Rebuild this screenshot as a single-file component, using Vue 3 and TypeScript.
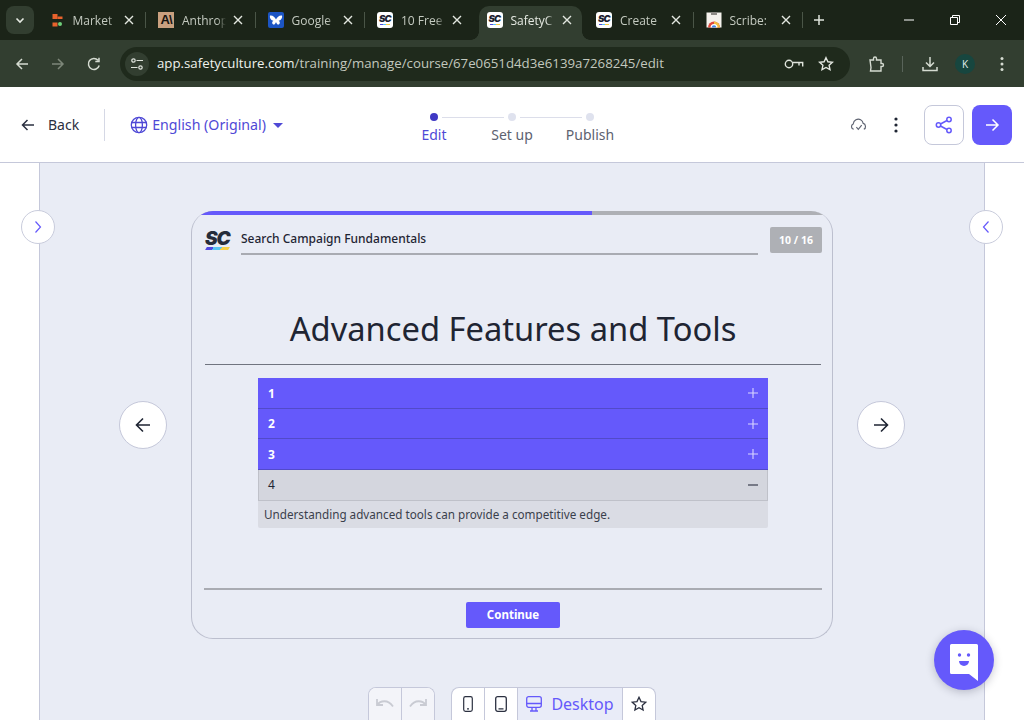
<template>
  <div class="screen">
    <div class="tabstrip">
      <button class="tab-search" type="button">
        <svg width="12" height="12" viewBox="0 0 12 12"><path d="M2.5 4.5 6 8l3.5-3.5" fill="none" stroke="#e6eae3" stroke-width="1.6" /></svg>
      </button>
      <div class="tabs">
        <div v-for="(tab, i) in tabs" :key="i" class="tab" :class="{ active: tab.active, sep: tab.sep }">
          <span class="favicon">
            <svg v-if="tab.icon === 'market'" width="16" height="16" viewBox="0 0 16 16">
              <rect x="3.500" y="2" width="5" height="5" fill="#e8622c" />
              <rect x="8.500" y="4.500" width="5" height="2.500" fill="#e8622c" />
              <rect x="3.500" y="10.500" width="5" height="4" fill="#e8622c" />
              <circle cx="11" cy="12" r="2" fill="#6fd07a" />
            </svg>
            <span v-else-if="tab.icon === 'anthropic'" class="fav-anthropic">A\</span>
            <svg v-else-if="tab.icon === 'google'" width="16" height="16" viewBox="0 0 16 16">
              <rect width="16" height="16" rx="2" fill="#1c55c4" />
              <path d="M2 3.500c2.300-.6 5 1.300 6 4 1-2.700 3.700-4.600 6-4 .6 2.800-1.300 5-3.400 5.200 1.500.5 1.700 2.900.3 3.700-1.300.6-2.400-1-2.900-2.500-.5 1.500-1.600 3.100-2.900 2.500-1.400-.8-1.200-3.200.3-3.700C3.300 8.500 1.400 6.300 2 3.500z" fill="#fff" />
            </svg>
            <span v-else-if="tab.icon === 'sc'" class="fav-sc">SC</span>
            <svg v-else width="16" height="16" viewBox="0 0 16 16">
              <rect x="0.500" y="0.500" width="15" height="15" fill="#f4f1ec" />
              <rect x="5" y="0" width="6" height="3" fill="#8d8a85" />
              <path d="M2 15.500a6 6 0 0 1 12 0z" fill="#e0483c" />
              <path d="M8 15.500V9.500a6 6 0 0 1 6 6z" fill="#f2bd42" />
              <path d="M4.500 15.500a3.500 3.500 0 0 1 7 0z" fill="#fff" />
              <path d="M5.800 15.500a2.200 2.200 0 0 1 4.400 0z" fill="#3f86e8" />
            </svg>
          </span>
          <span class="tab-title">{{ tab.title }}</span>
          <svg class="tab-close" width="10" height="10" viewBox="0 0 10 10"><path d="M1 1l8 8M9 1 1 9" stroke="#e3e7e0" stroke-width="1.400" /></svg>
        </div>
      </div>
      <svg class="new-tab" width="14" height="14" viewBox="0 0 14 14"><path d="M7 2v10M2 7h10" stroke="#dfe4dc" stroke-width="1.500" /></svg>
      <div class="win-controls">
        <svg width="12" height="12" viewBox="0 0 12 12"><path d="M1 6h10" stroke="#fff" /></svg>
        <svg width="12" height="12" viewBox="0 0 12 12"><path d="M1.500 3.500h7v7h-7zM3.500 3.500v-2h7v7h-2" fill="none" stroke="#fff" /></svg>
        <svg width="12" height="12" viewBox="0 0 12 12"><path d="M1 1l10 10M11 1 1 11" stroke="#fff" /></svg>
      </div>
    </div>

    <div class="toolbar">
      <svg class="tb-icon" width="16" height="16" viewBox="0 0 16 16"><path d="M14 8H3M8 3 3 8l5 5" fill="none" stroke="#d5dbd1" stroke-width="1.500" /></svg>
      <svg class="tb-icon" width="16" height="16" viewBox="0 0 16 16"><path d="M2 8h11M8 3l5 5-5 5" fill="none" stroke="#7d8779" stroke-width="1.500" /></svg>
      <svg class="tb-icon" width="16" height="16" viewBox="0 0 16 16"><path d="M13.200 9.500A5.500 5.500 0 1 1 12 4.200M13 1.800v3.700H9.300" fill="none" stroke="#d5dbd1" stroke-width="1.500" /></svg>
      <div class="omnibox">
        <span class="site-btn">
          <svg width="14" height="14" viewBox="0 0 14 14" fill="none" stroke="#dfe4dc" stroke-width="1.200">
            <circle cx="3.500" cy="3.500" r="1.700" /><path d="M6.500 3.500H13M1 10.500h6.500" /><circle cx="10.500" cy="10.500" r="1.700" />
          </svg>
        </span>
        <span class="url"><span class="host">app.safetyculture.com</span>/training/manage/course/67e0651d4d3e6139a7268245/edit</span>
        <svg width="20" height="12" viewBox="0 0 20 12" fill="none" stroke="#dfe4dc" stroke-width="1.400"><circle cx="5" cy="6" r="3.700" /><path d="M8.700 4.500h10v4M15 4.500v3" /></svg>
        <svg class="omni-star" width="16" height="16" viewBox="0 0 16 16"><path d="m8 1.700 1.900 4.100 4.500.5-3.300 3 .9 4.400L8 11.500l-4 2.200.9-4.400-3.300-3 4.500-.5z" fill="none" stroke="#e3e7e0" stroke-width="1.400" /></svg>
      </div>
      <svg class="ext" width="18" height="18" viewBox="0 0 18 18"><path d="M3 5h3.500V3.500a1.500 1.500 0 0 1 3 0V5H14v3.500h1a1.500 1.500 0 0 1 0 3h-1V16H3.500L4 12.500 3 5z" fill="none" stroke="#d5dbd1" stroke-width="1.400" /></svg>
      <span class="tb-divider"></span>
      <svg class="dl" width="16" height="16" viewBox="0 0 16 16"><path d="M8 1v9M4 6.500 8 10.500l4-4M1 11v3.500h14V11" fill="none" stroke="#d5dbd1" stroke-width="1.500" /></svg>
      <span class="avatar">K</span>
      <svg class="menu" width="4" height="16" viewBox="0 0 4 16"><circle cx="2" cy="2.500" r="1.500" fill="#d5dbd1" /><circle cx="2" cy="8" r="1.500" fill="#d5dbd1" /><circle cx="2" cy="13.500" r="1.500" fill="#d5dbd1" /></svg>
    </div>

    <header class="app-head">
      <div class="head-left">
        <svg width="16" height="16" viewBox="0 0 16 16"><path d="M14 8H2.500M7.500 3l-5 5 5 5" fill="none" stroke="#2b3040" stroke-width="1.500" /></svg>
        <span class="back">Back</span>
        <span class="head-divider"></span>
        <svg class="globe" width="18" height="18" viewBox="0 0 18 18" fill="none" stroke="#4f49d6" stroke-width="1.300">
          <circle cx="9" cy="9" r="7.700" /><ellipse cx="9" cy="9" rx="3.400" ry="7.700" /><path d="M1.500 6.500h15M1.500 11.500h15" />
        </svg>
        <span class="lang">English (Original)</span>
        <span class="caret"></span>
      </div>
      <div class="stepper">
        <div v-for="(step, i) in steps" :key="step" class="step" :class="{ current: i === 0 }">
          <span class="step-dot"></span>
          <span class="step-label">{{ step }}</span>
        </div>
      </div>
      <div class="head-right">
        <svg width="17" height="15" viewBox="0 0 16 14" fill="none" stroke="#5f6472" stroke-width="1.100"><path d="M3.500 11.500C1 11 .6 7.500 3 6.500 3.500 3 7 1 10 2.500c1.500.8 2.200 2.200 2.400 3.500 2.600.6 3 4.500.6 5.500" /><path d="m6 9.500 1.800 2L11 7.500" /></svg>
        <svg class="more" width="4" height="16" viewBox="0 0 4 16"><circle cx="2" cy="2" r="1.600" fill="#1f2533" /><circle cx="2" cy="8" r="1.600" fill="#1f2533" /><circle cx="2" cy="14" r="1.600" fill="#1f2533" /></svg>
        <button class="share" type="button">
          <svg width="18" height="18" viewBox="0 0 18 18" fill="none" stroke="#6559fb" stroke-width="1.500"><circle cx="3.500" cy="9" r="2.200" /><circle cx="14" cy="3.500" r="2.200" /><circle cx="14" cy="14.500" r="2.200" /><path d="m5.500 8 6.500-3.500M5.500 10l6.500 3.500" /></svg>
        </button>
        <button class="go" type="button">
          <svg width="16" height="16" viewBox="0 0 16 16"><path d="M2 8h12M8.500 2.500 14 8l-5.500 5.500" fill="none" stroke="#fff" stroke-width="1.500" /></svg>
        </button>
      </div>
    </header>

    <main class="canvas">
      <button class="panel-toggle left" type="button">
        <svg width="8" height="14" viewBox="0 0 8 14"><path d="m1.500 1.500 5 5.500-5 5.500" fill="none" stroke="#6559fb" stroke-width="1.200" /></svg>
      </button>
      <button class="panel-toggle right" type="button">
        <svg width="8" height="14" viewBox="0 0 8 14"><path d="M6.500 1.500 1.500 7l5 5.500" fill="none" stroke="#6559fb" stroke-width="1.200" /></svg>
      </button>

      <div class="stage">
        <button class="nav-btn" type="button">
          <svg width="18" height="18" viewBox="0 0 18 18"><path d="M16 9H2.500M9 2.500 2.500 9 9 15.500" fill="none" stroke="#1f2533" stroke-width="1.600" /></svg>
        </button>

        <section class="slide">
          <div class="progress"><div class="progress-fill" :style="{ width: progress + '%' }"></div></div>
          <div class="slide-head">
            <div class="logo"><span class="logo-text">SC</span><span class="logo-bar"></span></div>
            <div class="course">Search Campaign Fundamentals</div>
            <div class="count">10 / 16</div>
          </div>
          <h1 class="slide-title">Advanced Features and Tools</h1>
          <div class="accordion">
            <div v-for="row in rows" :key="row.label" class="acc-row" :class="{ open: row.open }">
              <span>{{ row.label }}</span>
              <svg width="10" height="10" viewBox="0 0 10 10">
                <path :d="row.open ? 'M0 5h10' : 'M5 0v10M0 5h10'" :stroke="row.open ? '#2b3040' : '#d9d6ff'" stroke-width="1.100" />
              </svg>
            </div>
            <div class="acc-body">Understanding advanced tools can provide a competitive edge.</div>
          </div>
          <div class="slide-foot">
            <button class="continue" type="button">Continue</button>
          </div>
        </section>

        <button class="nav-btn" type="button">
          <svg width="18" height="18" viewBox="0 0 18 18"><path d="M2 9h13.500M9 2.500 15.500 9 9 15.500" fill="none" stroke="#1f2533" stroke-width="1.600" /></svg>
        </button>
      </div>

      <div class="tools">
        <div class="tool-group">
          <span class="tool muted">
            <svg width="20" height="14" viewBox="0 0 20 14" fill="none" stroke="#c9cbd3" stroke-width="1.800"><path d="M2 2v6h6M2.500 8C5 3.500 13 2 18 9.500" /></svg>
          </span>
          <span class="tool muted">
            <svg width="20" height="14" viewBox="0 0 20 14" fill="none" stroke="#c9cbd3" stroke-width="1.800"><path d="M18 2v6h-6M17.500 8C15 3.500 7 2 2 9.500" /></svg>
          </span>
        </div>
        <div class="tool-group">
          <span class="tool">
            <svg width="10" height="16" viewBox="0 0 10 16" fill="none" stroke="#2b3040" stroke-width="1.200"><rect x="0.700" y="0.700" width="8.600" height="14.600" rx="1.800" /><path d="M4 12.800h2" /></svg>
          </span>
          <span class="tool">
            <svg width="12" height="16" viewBox="0 0 12 16" fill="none" stroke="#2b3040" stroke-width="1.300"><rect x="0.700" y="0.700" width="10.600" height="14.600" rx="2" /><path d="M3.500 12.800h5" /></svg>
          </span>
          <span class="tool desktop">
            <svg width="16" height="16" viewBox="0 0 16 16" fill="none" stroke="#6559fb" stroke-width="1.300"><rect x="0.700" y="0.700" width="14.600" height="10.600" rx="2" /><path d="M.7 7.500h14.600M6 11.500v3.300M10 11.500v3.300M4 15h8" /></svg>
            <span>Desktop</span>
          </span>
          <span class="tool">
            <svg width="16" height="16" viewBox="0 0 16 16"><path d="m8 1.300 2 4.300 4.700.6-3.500 3.200.9 4.700L8 11.800l-4.100 2.300.9-4.700-3.500-3.200L6 5.600z" fill="none" stroke="#2b3040" stroke-width="1.300" /></svg>
          </span>
        </div>
      </div>
    </main>

    <button class="chat" type="button">
      <svg width="28" height="37" viewBox="0 0 28 37">
        <path d="M1.500 0h25A1.500 1.500 0 0 1 28 1.500V37l-9-7H1.500A1.500 1.500 0 0 1 0 28.500v-27A1.500 1.500 0 0 1 1.500 0z" fill="#fff" />
        <circle cx="9.500" cy="11" r="1.700" fill="#6559fb" />
        <circle cx="18.500" cy="11" r="1.700" fill="#6559fb" />
        <path d="M9 17h10a5 5 0 0 1-10 0z" fill="#6559fb" />
      </svg>
    </button>
  </div>
</template>

<script setup lang="ts">
interface Tab {
  title: string;
  icon: "market" | "anthropic" | "google" | "sc" | "scribe";
  active?: boolean;
  sep?: boolean;
}

// titles are cut off in the strip, only what shows is kept
const tabs: Tab[] = [
  { title: "Market", icon: "market", sep: true },
  { title: "Anthrop", icon: "anthropic", sep: true },
  { title: "Google", icon: "google", sep: true },
  { title: "10 Free", icon: "sc" },
  { title: "SafetyC", icon: "sc", active: true },
  { title: "Create", icon: "sc", sep: true },
  { title: "Scribe:", icon: "scribe", sep: true },
];

const steps = ["Edit", "Set up", "Publish"];
const progress = 62.5;

const rows = [
  { label: "1", open: false },
  { label: "2", open: false },
  { label: "3", open: false },
  { label: "4", open: true },
];
</script>

<style>
html,
body {
  margin: 0;
  background: #fff;
  overflow: hidden;
}
</style>

<style scoped>
.screen {
  position: relative;
  width: 1024px;
  height: 720px;
  overflow: hidden;
  font-family: "Noto Sans", sans-serif;
  color: #1f2533;
}
button {
  padding: 0;
  font: inherit;
  cursor: pointer;
}
svg {
  display: block;
  flex: none;
}

/* browser chrome */
.tabstrip {
  display: flex;
  align-items: flex-start;
  height: 40px;
  padding-left: 6px;
  box-sizing: border-box;
  background: #1b2418;
  font-family: "Open Sans", sans-serif;
}
.tab-search {
  display: flex;
  align-items: center;
  justify-content: center;
  width: 28px;
  height: 28px;
  margin-top: 6px;
  border: 0;
  border-radius: 8px;
  background: #323e30;
}
.tabs {
  display: flex;
  margin-left: 4.500px;
  padding-top: 6px;
  height: 34px;
}
.tab {
  position: relative;
  display: flex;
  align-items: center;
  width: 109.500px;
  height: 34px;
  padding-left: 10px;
  box-sizing: border-box;
  color: #c4cac0;
  font-size: 12px;
}
.tab.sep::after {
  content: "";
  position: absolute;
  right: 2px;
  top: 6px;
  width: 1px;
  height: 16px;
  background: #4a5547;
}
.tab.active {
  width: 103.500px;
  margin: 0 4px 0 2px;
  padding-left: 8px;
  background: #323e30;
  border-radius: 10px 10px 0 0;
  color: #e6eae3;
}
.tab.active::before,
.tab.active::after {
  content: "";
  position: absolute;
  bottom: 0;
  width: 8px;
  height: 8px;
}
.tab.active::before {
  left: -8px;
  background: radial-gradient(circle at 0 0, transparent 7.500px, #323e30 8px);
}
.tab.active::after {
  right: -8px;
  background: radial-gradient(circle at 100% 0, transparent 7.500px, #323e30 8px);
}
.favicon {
  display: flex;
  width: 16px;
  height: 16px;
  margin-top: -6px;
}
.fav-anthropic {
  width: 16px;
  height: 16px;
  background: #c9a07f;
  color: #16130f;
  font: 700 13px/16px "Liberation Sans", sans-serif;
  letter-spacing: -1px;
  text-align: center;
}
.fav-sc {
  width: 16px;
  height: 16px;
  box-sizing: border-box;
  border-radius: 3px;
  background: linear-gradient(90deg, #5248e0 35%, #58c4f2 35% 65%, #f5cf45 65%) 3px 12px / 10px 1px no-repeat #fff;
  color: #1d2230;
  font: italic 900 9.500px/14px Inter, sans-serif;
  letter-spacing: -0.600px;
  text-align: center;
}
.tab-title {
  width: 44px;
  margin: -6px 0 0 8px;
  overflow: hidden;
  white-space: nowrap;
  -webkit-mask-image: linear-gradient(90deg, #000 80%, transparent);
  mask-image: linear-gradient(90deg, #000 80%, transparent);
}
.tab-close {
  margin: -6px 0 0 7px;
}
.new-tab {
  margin: 13px 0 0 7px;
}
.win-controls {
  display: flex;
  gap: 34px;
  margin: 14px 17px 0 auto;
}
.toolbar {
  display: flex;
  align-items: center;
  height: 47px;
  padding: 0 0 0 14px;
  box-sizing: border-box;
  background: #323e30;
}
.tb-icon {
  margin-right: 20px;
}
.omnibox {
  display: flex;
  align-items: center;
  width: 730px;
  height: 34px;
  margin-left: -2px;
  padding: 0 16px 0 5px;
  box-sizing: border-box;
  border-radius: 17px;
  background: #1f2a1c;
}
.site-btn {
  display: flex;
  align-items: center;
  justify-content: center;
  width: 24px;
  height: 24px;
  border-radius: 50%;
  background: #323e30;
}
.url {
  flex: 1;
  margin: 0 0 1px 8px;
  color: #c2c8be;
  font: 13.250px "Open Sans", sans-serif;
  white-space: nowrap;
}
.host {
  color: #eef1ec;
}
.omni-star {
  margin-left: 14px;
}
.ext {
  margin-left: 17px;
}
.tb-divider {
  width: 1px;
  height: 16px;
  margin-left: 17px;
  background: #59645a;
}
.dl {
  margin-left: 19px;
}
.avatar {
  width: 20px;
  height: 20px;
  margin-left: 17px;
  border-radius: 50%;
  background: #17463f;
  color: #e4f0ec;
  font: 10px/20px "Open Sans", sans-serif;
  text-align: center;
}
.menu {
  margin-left: 25px;
}

/* app header */
.app-head {
  display: grid;
  grid-template-columns: 1fr auto 1fr;
  align-items: center;
  height: 76px;
  padding: 0 12px;
  box-sizing: border-box;
  background: #fff;
  border-bottom: 1px solid #c5c8da;
}
.head-left,
.head-right {
  display: flex;
  align-items: center;
}
.head-left {
  padding-left: 8px;
}
.head-right {
  justify-content: flex-end;
}
.back {
  margin: 0 0 1px 12px;
  font-size: 14px;
  color: #2b3040;
}
.head-divider {
  width: 1px;
  height: 32px;
  margin-left: 25px;
  background: #d5d8e5;
}
.globe {
  margin-left: 25px;
}
.lang {
  margin: 0 0 1px 4px;
  color: #4f49d6;
  font-size: 14.200px;
}
.caret {
  width: 0;
  height: 0;
  margin: 1px 0 0 7px;
  border: 5px solid transparent;
  border-top: 5px solid #4f49d6;
  border-bottom: 0;
}
.stepper {
  display: flex;
  width: 234px;
}
.step {
  position: relative;
  flex: 1;
  display: flex;
  flex-direction: column;
  align-items: center;
  gap: 4px;
  padding-top: 8px;
  color: #5d6270;
  font-size: 14px;
  line-height: 20px;
}
.step-label {
  margin-bottom: -1px;
}
.step + .step::before {
  content: "";
  position: absolute;
  top: 12px;
  left: -31px;
  width: 62px;
  height: 1px;
  background: #dcdeea;
}
.step-dot {
  width: 8px;
  height: 8px;
  border-radius: 50%;
  background: #dfe2ee;
}
.step.current {
  color: #4f49d6;
}
.step.current .step-dot {
  background: #3f38c4;
}
.more {
  margin: 0 26px 0 27px;
}
.share,
.go {
  display: flex;
  align-items: center;
  justify-content: center;
  width: 40px;
  height: 40px;
  box-sizing: border-box;
  border-radius: 8px;
}
.share {
  border: 1px solid #c5c8da;
  background: #fff;
}
.go {
  margin-left: 8px;
  border: 0;
  background: #6559fb;
}

/* editor canvas */
.canvas {
  position: relative;
  width: 946px;
  height: 557px;
  margin-left: 39px;
  box-sizing: border-box;
  background: #e9ecf5;
  border-left: 1px solid #c5c8da;
  border-right: 1px solid #c5c8da;
}
.panel-toggle {
  position: absolute;
  top: 47px;
  display: flex;
  align-items: center;
  justify-content: center;
  width: 34px;
  height: 34px;
  box-sizing: border-box;
  border: 1px solid #c9ccdc;
  border-radius: 50%;
  background: #fff;
}
.panel-toggle.left {
  left: -19px;
}
.panel-toggle.right {
  right: -19px;
}
.stage {
  display: flex;
  align-items: center;
  justify-content: center;
  gap: 24px;
  padding-top: 48px;
}
.nav-btn {
  display: flex;
  align-items: center;
  justify-content: center;
  width: 48px;
  height: 48px;
  box-sizing: border-box;
  border: 1px solid #c5c8da;
  border-radius: 50%;
  background: #fff;
}
.slide {
  display: flex;
  flex-direction: column;
  width: 642px;
  height: 428px;
  box-sizing: border-box;
  overflow: hidden;
  border: 1px solid #bcbfce;
  border-top: 0;
  border-radius: 22px;
}
.progress {
  flex: none;
  height: 4px;
  background: #aeb0b5;
}
.progress-fill {
  height: 100%;
  background: #6559fb;
}
.slide-head {
  display: flex;
  align-items: flex-start;
  padding: 12px 10px 0 13px;
}
.logo {
  width: 26px;
  margin-top: 4px;
}
.logo-text {
  display: block;
  color: #262c3a;
  font: italic 900 19px/15px Inter, sans-serif;
  letter-spacing: -1.200px;
}
.logo-bar {
  display: block;
  width: 23px;
  height: 3px;
  margin: 1px 0 0 1px;
  background: linear-gradient(90deg, #5248e0 30%, #58c4f2 30% 65%, #f5cf45 65%);
  transform: skewX(-30deg);
}
.course {
  flex: 1;
  height: 28px;
  margin-left: 10px;
  box-sizing: border-box;
  border-bottom: 2px solid #a9abb2;
  font-size: 12px;
  font-weight: 500;
  line-height: 23px;
}
.count {
  width: 52px;
  height: 26px;
  margin-left: 12px;
  border-radius: 2px;
  background: #aeb0b5;
  color: #fff;
  font-size: 10.500px;
  font-weight: 700;
  line-height: 26px;
  text-align: center;
}
.slide-title {
  margin: 51px 11px 0 13px;
  padding-bottom: 12px;
  border-bottom: 1px solid #70747f;
  color: #1f2533;
  font-size: 32.700px;
  font-weight: 400;
  line-height: 46px;
  text-align: center;
}
.accordion {
  width: 510px;
  margin: 13px 0 0 66px;
  font-size: 12px;
}
.acc-row {
  display: flex;
  align-items: center;
  justify-content: space-between;
  height: 30.700px;
  padding: 0 10px;
  box-sizing: border-box;
  background: #6559fb;
  border-bottom: 1px solid #524ac9;
  color: #fff;
  font-weight: 700;
}
.acc-row:first-child {
  padding-top: 1px;
}
.acc-row.open {
  background: #d4d6de;
  border: 1px solid #bfc1c9;
  border-top: 0;
  padding: 0 9px;
  color: #1f2533;
  font-weight: 400;
}
.acc-body {
  height: 27px;
  padding: 0 6px;
  border-radius: 0 0 2px 2px;
  background: #dadce4;
  color: #3a3f4c;
  font-size: 11.700px;
  line-height: 27px;
}
.slide-foot {
  margin: auto 10px 0 12px;
  height: 50px;
  box-sizing: border-box;
  border-top: 2px solid #a9abb2;
  text-align: center;
}
.continue {
  display: block;
  width: 94px;
  height: 26px;
  margin: 12px 0 0 262px;
  padding-bottom: 2px;
  border: 0;
  border-radius: 2px;
  background: #6559fb;
  color: #fff;
  font-size: 11.500px;
  font-weight: 700;
}
.tools {
  display: flex;
  gap: 16px;
  margin: 48px 0 0 328px;
}
.tool-group {
  display: flex;
  height: 40px;
  border: 1px solid #c5c8da;
  border-bottom: 0;
  border-radius: 8px 8px 0 0;
  overflow: hidden;
  background: #fff;
}
.tool {
  display: flex;
  align-items: flex-start;
  justify-content: center;
  width: 33px;
  padding-top: 8px;
  box-sizing: border-box;
}
.tool:first-child {
  width: 32px;
}
.tool + .tool {
  border-left: 1px solid #c5c8da;
}
.tool.muted {
  padding-top: 9px;
  background: #f3f4f9;
}
.tool.desktop {
  width: 105px;
  gap: 9px;
  background: #e9ecf8;
  color: #6559fb;
  font-size: 16px;
  line-height: 16px;
}
.chat {
  position: absolute;
  left: 934px;
  top: 630px;
  display: flex;
  align-items: center;
  justify-content: center;
  width: 60px;
  height: 60px;
  padding: 5px 0 0;
  border: 0;
  border-radius: 50%;
  background: #6559fb;
  box-shadow: 0 2px 8px rgba(30, 30, 60, 0.25);
}
</style>
